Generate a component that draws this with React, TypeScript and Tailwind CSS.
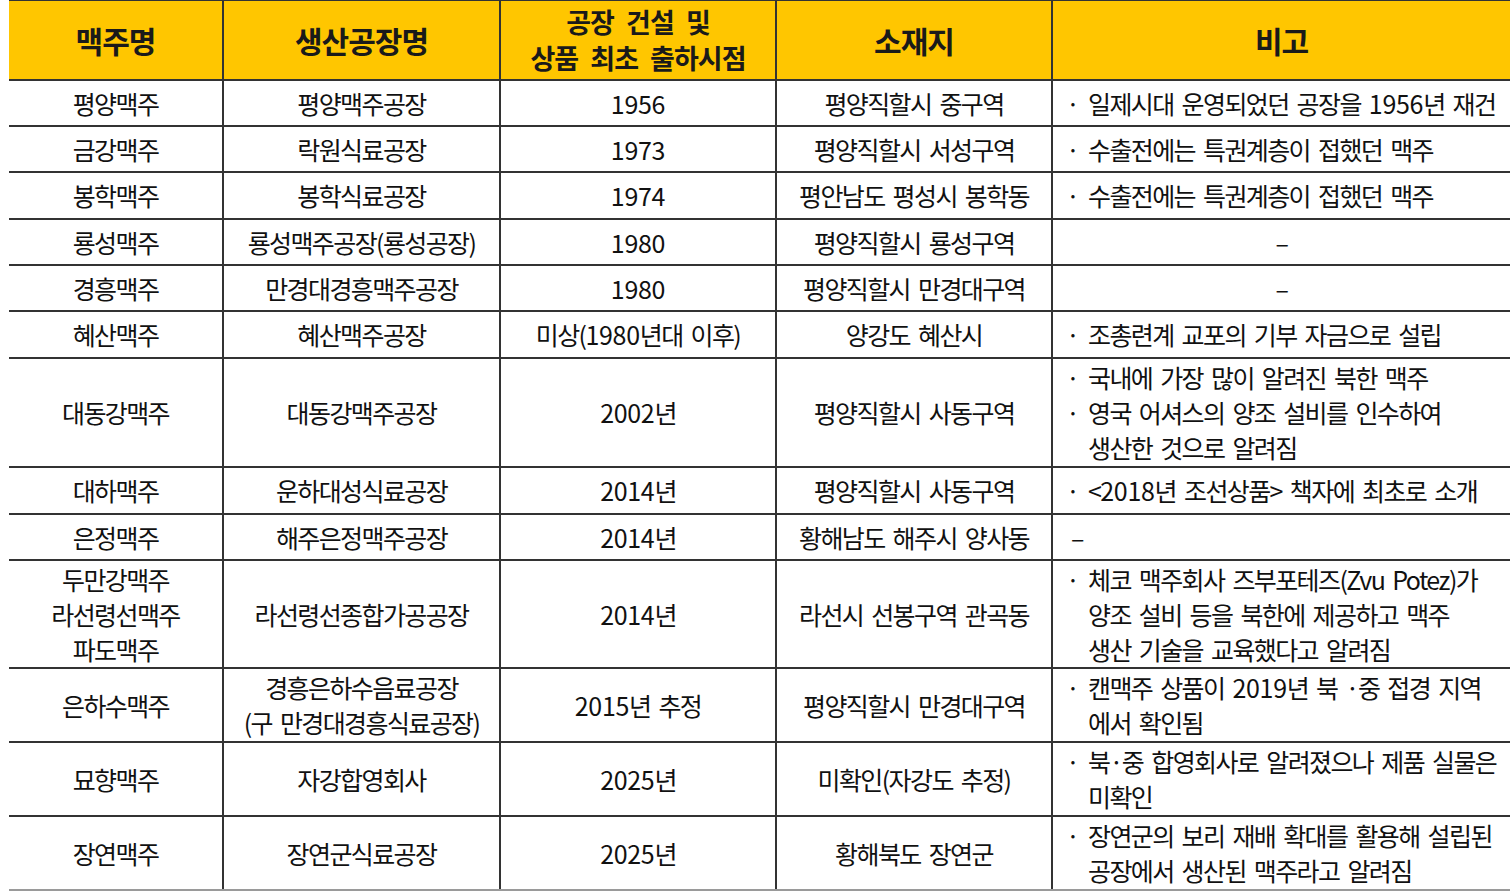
import React from 'react';

type Note = { kind: 'bullets'; items: string[][] } | { kind: 'dash'; align: 'center' | 'left' };

type Row = {
  beer: string[];
  factory: string[];
  year: string;
  place: string;
  note: Note;
  h: string;
};

const rows: Row[] = [
  { beer: ['평양맥주'], factory: ['평양맥주공장'], year: '1956', place: '평양직할시 중구역', note: { kind: 'bullets', items: [['일제시대 운영되었던 공장을 1956년 재건']] }, h: 'h-[46px]' },
  { beer: ['금강맥주'], factory: ['락원식료공장'], year: '1973', place: '평양직할시 서성구역', note: { kind: 'bullets', items: [['수출전에는 특권계층이 접했던 맥주']] }, h: 'h-[46px]' },
  { beer: ['봉학맥주'], factory: ['봉학식료공장'], year: '1974', place: '평안남도 평성시 봉학동', note: { kind: 'bullets', items: [['수출전에는 특권계층이 접했던 맥주']] }, h: 'h-[47px]' },
  { beer: ['룡성맥주'], factory: ['룡성맥주공장(룡성공장)'], year: '1980', place: '평양직할시 룡성구역', note: { kind: 'dash', align: 'center' }, h: 'h-[46px]' },
  { beer: ['경흥맥주'], factory: ['만경대경흥맥주공장'], year: '1980', place: '평양직할시 만경대구역', note: { kind: 'dash', align: 'center' }, h: 'h-[46px]' },
  { beer: ['혜산맥주'], factory: ['혜산맥주공장'], year: '미상(1980년대 이후)', place: '양강도 혜산시', note: { kind: 'bullets', items: [['조총련계 교포의 기부 자금으로 설립']] }, h: 'h-[47px]' },
  { beer: ['대동강맥주'], factory: ['대동강맥주공장'], year: '2002년', place: '평양직할시 사동구역', note: { kind: 'bullets', items: [['국내에 가장 많이 알려진 북한 맥주'], ['영국 어셔스의 양조 설비를 인수하여', '생산한 것으로 알려짐']] }, h: 'h-[109px]' },
  { beer: ['대하맥주'], factory: ['운하대성식료공장'], year: '2014년', place: '평양직할시 사동구역', note: { kind: 'bullets', items: [['<2018년 조선상품> 책자에 최초로 소개']] }, h: 'h-[47px]' },
  { beer: ['은정맥주'], factory: ['해주은정맥주공장'], year: '2014년', place: '황해남도 해주시 양사동', note: { kind: 'dash', align: 'left' }, h: 'h-[46px]' },
  { beer: ['두만강맥주', '라선령선맥주', '파도맥주'], factory: ['라선령선종합가공공장'], year: '2014년', place: '라선시 선봉구역 관곡동', note: { kind: 'bullets', items: [['체코 맥주회사 즈부포테즈(Zvu Potez)가', '양조 설비 등을 북한에 제공하고 맥주', '생산 기술을 교육했다고 알려짐']] }, h: 'h-[108px]' },
  { beer: ['은하수맥주'], factory: ['경흥은하수음료공장', '(구 만경대경흥식료공장)'], year: '2015년 추정', place: '평양직할시 만경대구역', note: { kind: 'bullets', items: [['캔맥주 상품이 2019년 북 ·중 접경 지역', '에서 확인됨']] }, h: 'h-[74px]' },
  { beer: ['묘향맥주'], factory: ['자강합영회사'], year: '2025년', place: '미확인(자강도 추정)', note: { kind: 'bullets', items: [['북·중 합영회사로 알려졌으나 제품 실물은', '미확인']] }, h: 'h-[74px]' },
  { beer: ['장연맥주'], factory: ['장연군식료공장'], year: '2025년', place: '황해북도 장연군', note: { kind: 'bullets', items: [['장연군의 보리 재배 확대를 활용해 설립된', '공장에서 생산된 맥주라고 알려짐']] }, h: 'h-[74px]' },
];

const grid = 'grid grid-cols-[213px_277px_276px_276px_459px]';

// digits in the source font run wider than the condensed hangul, so give them normal tracking
function T({ s }: { s: string }) {
  const parts = s.split(/(\d+)/);
  return (
    <>
      {parts.map((p, i) =>
        /^\d+$/.test(p) ? (
          <span key={i} className="tracking-[-0.3px]">{p}</span>
        ) : (
          <React.Fragment key={i}>{p}</React.Fragment>
        )
      )}
    </>
  );
}

function Lines({ lines }: { lines: string[] }) {
  return (
    <div className="text-center">
      {lines.map((l, i) => (
        <div key={i} className="whitespace-nowrap"><T s={l} /></div>
      ))}
    </div>
  );
}

function NoteCell({ note }: { note: Note }) {
  if (note.kind === 'dash') {
    return (
      <div className={`flex items-center border-l-2 border-[#333] ${note.align === 'center' ? 'justify-center' : 'pl-[18px]'}`}>
        –
      </div>
    );
  }
  return (
    <div className="flex flex-col justify-center border-l-2 border-[#333] pl-[13px]">
      {note.items.map((item, i) => (
        <div key={i} className="flex">
          <span className="w-[22px] shrink-0">·</span>
          <div>
            {item.map((l, j) => (
              <div key={j} className="whitespace-nowrap"><T s={l} /></div>
            ))}
          </div>
        </div>
      ))}
    </div>
  );
}

export default function App() {
  return (
    <div className="min-h-screen bg-white font-['Noto_Sans_CJK_KR',sans-serif] text-[#111]">
      <div className="ml-[9px] w-[1501px]">
        {/* Header */}
        <div className={`${grid} h-[81px] border-t border-b-2 border-[#333] bg-[#ffc600] font-bold tracking-[-1px] text-[#1a1a1a]`}>
          <div className="flex items-center justify-center text-[30px]">맥주명</div>
          <div className="flex items-center justify-center border-l-2 border-[#333] text-[30px]">생산공장명</div>
          <div className="flex flex-col items-center justify-center border-l-2 border-[#333] text-[27px] leading-[36px] [word-spacing:7px]">
            <div>공장 건설 및</div>
            <div>상품 최초 출하시점</div>
          </div>
          <div className="flex items-center justify-center border-l-2 border-[#333] text-[30px]">소재지</div>
          <div className="flex items-center justify-center border-l-2 border-[#333] text-[30px]">비고</div>
        </div>

        {/* Body */}
        {rows.map((r, i) => (
          <div
            key={i}
            className={`${grid} ${r.h} border-b-2 ${i === rows.length - 1 ? 'border-[#9a9a9a]' : 'border-[#333]'} text-[25px] leading-[35px] tracking-[-1.6px] [word-spacing:4px]`}
          >
            <div className="flex items-center justify-center">
              <Lines lines={r.beer} />
            </div>
            <div className="flex items-center justify-center border-l-2 border-[#333]">
              <Lines lines={r.factory} />
            </div>
            <div className="flex items-center justify-center border-l-2 border-[#333]">
              <Lines lines={[r.year]} />
            </div>
            <div className="flex items-center justify-center border-l-2 border-[#333]">
              <Lines lines={[r.place]} />
            </div>
            <NoteCell note={r.note} />
          </div>
        ))}
      </div>
    </div>
  );
}
